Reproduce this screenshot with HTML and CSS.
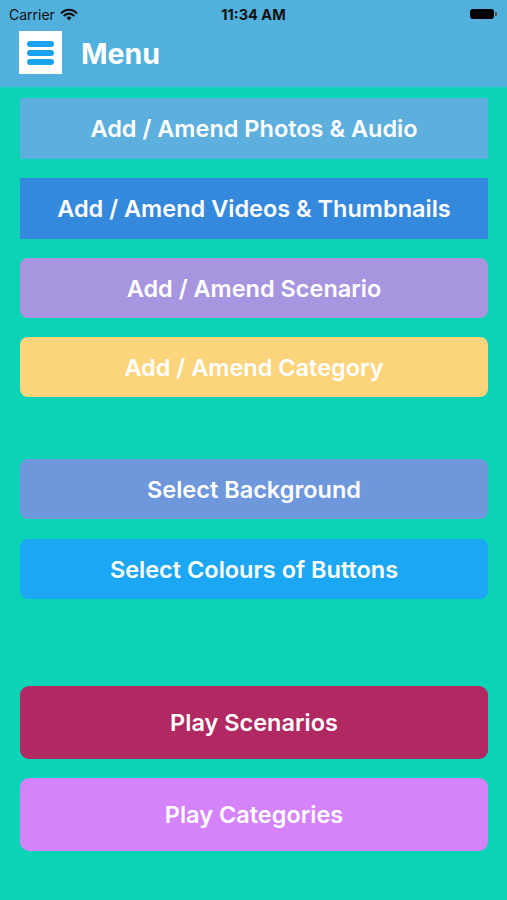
FILE: index.html
```html
<!DOCTYPE html>
<html>
<head>
<meta charset="utf-8">
<link rel="stylesheet" href="styles.css">
</head>
<body>
<div class="header">
  <div class="status">
    <div class="carrier">Carrier
      <svg class="wifi" width="18" height="13" viewBox="0 0 18 13"><path d="M9 12.5 L6.6 9.8 A3.4 3.4 0 0 1 11.4 9.8 Z" fill="#111"/><path d="M4.3 7.6 A6.6 6.6 0 0 1 13.7 7.6" stroke="#111" stroke-width="2.1" fill="none" stroke-linecap="round"/><path d="M1.6 4.8 A10.4 10.4 0 0 1 16.4 4.8" stroke="#111" stroke-width="2.1" fill="none" stroke-linecap="round"/></svg>
    </div>
    <div class="time">11:34 AM</div>
    <div class="battery"><div class="batt-body"></div><div class="batt-tip"></div></div>
  </div>
  <div class="nav">
    <div class="menu-btn">
      <span class="bar"></span><span class="bar"></span><span class="bar"></span>
    </div>
    <div class="title">Menu</div>
  </div>
</div>
<div class="content">
  <div class="btn sq h61 c1">Add / Amend Photos &amp; Audio</div>
  <div class="btn sq h61 c2 g19">Add / Amend Videos &amp; Thumbnails</div>
  <div class="btn c3 g19">Add / Amend Scenario</div>
  <div class="btn c4 g19">Add / Amend Category</div>
  <div class="btn c5 g62">Select Background</div>
  <div class="btn c6 g20">Select Colours of Buttons</div>
  <div class="btn tall c7 g87">Play Scenarios</div>
  <div class="btn tall c8 g19">Play Categories</div>
</div>
</body>
</html>
```
FILE: styles.css
```css
html, body {
  margin: 0;
  padding: 0;
}
body {
  width: 507px;
  height: 900px;
  background: #0AD4B5;
  font-family: Inter, "Liberation Sans", sans-serif;
  overflow: hidden;
}
.header {
  background: #52B0DC;
  height: 87px;
}
.status {
  height: 28px;
  display: flex;
  align-items: center;
  justify-content: space-between;
  padding: 0 10px 0 9px;
  position: relative;
}
.carrier {
  font-size: 14px;
  color: #111;
  display: flex;
  align-items: center;
  gap: 5px;
}
.time {
  position: absolute;
  left: 0;
  right: 0;
  text-align: center;
  font-size: 14.5px;
  font-weight: 700;
  color: #111;
}
.battery {
  display: flex;
  align-items: center;
  gap: 1px;
}
.batt-body {
  width: 24px;
  height: 10px;
  background: #000;
  border-radius: 3px;
}
.batt-tip {
  width: 2px;
  height: 4px;
  background: #555;
  border-radius: 0 1px 1px 0;
}
.nav {
  display: flex;
  align-items: center;
  padding: 3px 0 0 19px;
  gap: 19px;
}
.menu-btn {
  width: 43px;
  height: 43px;
  background: #fff;
  display: flex;
  flex-direction: column;
  justify-content: center;
  align-items: center;
  gap: 3px;
}
.bar {
  width: 27px;
  height: 6px;
  border-radius: 3px;
  background: #18A2F0;
}
.title {
  font-size: 28.5px;
  font-weight: 700;
  color: #fff;
  padding-top: 2px;
}
.content {
  padding: 11px 19px 0 20px;
  display: flex;
  flex-direction: column;
}
.btn {
  height: 60px;
  border-radius: 8px;
  display: flex;
  align-items: center;
  justify-content: center;
  color: #fff;
  font-size: 23.5px;
  font-weight: 600;
}
.btn.sq { border-radius: 0; }
.btn.h61 { height: 61px; }
.btn.tall { height: 73px; border-radius: 9px; }
.g19 { margin-top: 19px; }
.g20 { margin-top: 20px; }
.g62 { margin-top: 62px; }
.g87 { margin-top: 87px; }
.c1 { background: #5DAFDE; }
.c2 { background: #3589DC; }
.c3 { background: #A795E0; }
.c4 { background: #FCD47C; }
.c5 { background: #6E97DC; }
.c6 { background: #1CA7F4; }
.c7 { background: #B22862; }
.c8 { background: #D483FB; }
```
